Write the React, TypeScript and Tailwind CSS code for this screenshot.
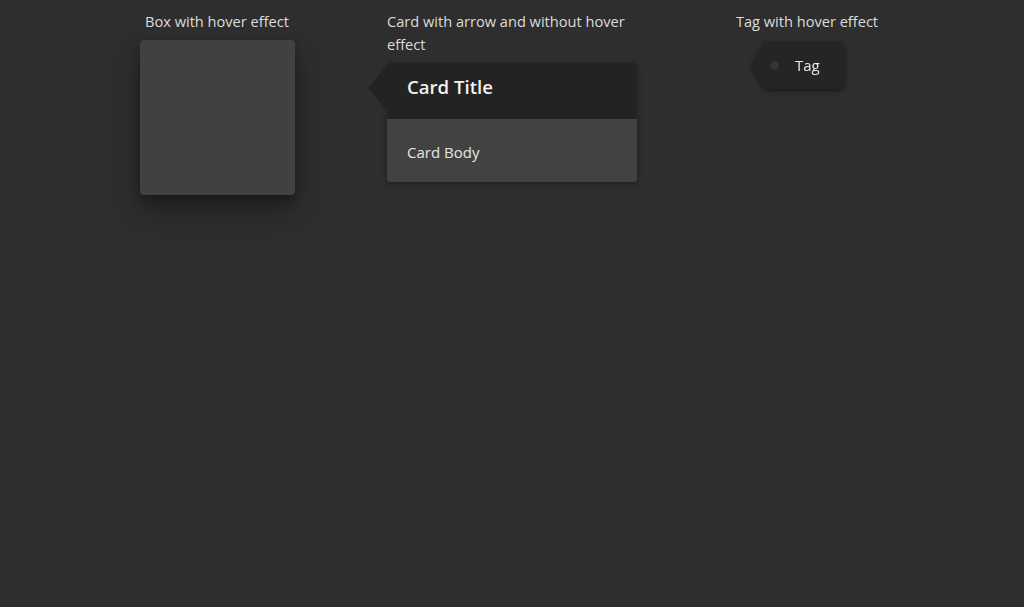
export default function App() {
  return (
    <div
      className="min-h-screen w-full bg-[#2e2e2e] text-[#dcdcdc]"
      style={{ fontFamily: '"Open Sans", "Noto Sans", sans-serif' }}
    >
      <div className="flex justify-center gap-[45px] pt-[10px]">
        {/* Box with hover effect */}
        <div className="flex w-[250px] flex-col items-center">
          <p className="text-[14.6px] leading-[23px]">Box with hover effect</p>
          <div className="mt-[7px] h-[155px] w-[155px] rounded-[4px] bg-[#414141] shadow-[0_14px_28px_rgba(0,0,0,0.35),0_6px_10px_rgba(0,0,0,0.2)] transition-transform hover:-translate-y-1" />
        </div>

        {/* Card with arrow */}
        <div className="flex w-[250px] flex-col">
          <p className="text-[14.6px] leading-[23px]">Card with arrow and without hover effect</p>
          <div className="relative mt-[7px] rounded-[4px] shadow-[0_2px_6px_rgba(0,0,0,0.3)]">
            <div className="absolute left-[-19px] top-[2px] h-0 w-0 border-y-[23px] border-r-[19px] border-y-transparent border-r-[#232323]" />
            <div className="h-[56px] rounded-t-[4px] bg-[#232323] px-[20px] pt-[10px]">
              <h3 className="text-[18.6px] font-semibold leading-[28px] text-[#f2f2f2]">Card Title</h3>
            </div>
            <div className="flex h-[63px] items-center rounded-b-[4px] bg-[#424242] px-[20px] pt-[3px]">
              <p className="text-[15px] text-[#e6e6e6]">Card Body</p>
            </div>
          </div>
        </div>

        {/* Tag with hover effect */}
        <div className="flex w-[250px] flex-col items-center">
          <p className="text-[14.6px] leading-[23px]">Tag with hover effect</p>
          <div className="relative mr-[4px] mt-[8px] flex cursor-pointer drop-shadow-[0_2px_2px_rgba(0,0,0,0.45)]">
            <div className="absolute left-[-14px] top-0 h-0 w-0 border-y-[24px] border-r-[14px] border-y-transparent border-r-[#252525]" />
            <div className="flex h-[48px] w-[80px] items-center rounded-r-[8px] bg-[#252525]">
              <span className="ml-[5px] h-[9px] w-[9px] rounded-full bg-[#343434]" />
              <span className="ml-[16px] text-[15px] text-[#e8e8e8]">Tag</span>
            </div>
          </div>
        </div>
      </div>
    </div>
  );
}
